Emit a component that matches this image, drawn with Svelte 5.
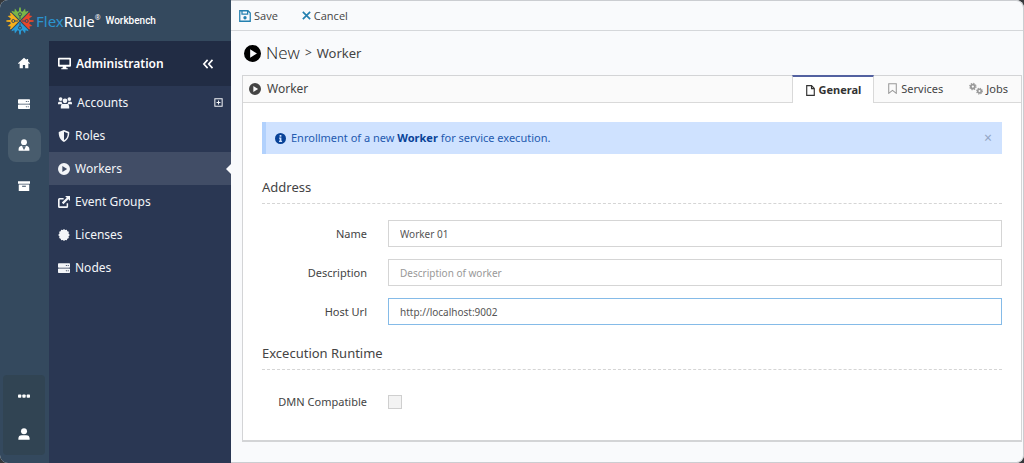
<script>
  let name = $state('Worker 01');
  let description = $state('');
  let hostUrl = $state('http://localhost:9002');
  let dmnCompatible = $state(false);
  let showInfo = $state(true);
  let selectedTab = $state('General');

  const rail = [
    { icon: 'home', label: 'Home' },
    { icon: 'server', label: 'Servers' },
    { icon: 'admin', label: 'Administration', active: true },
    { icon: 'archive', label: 'Archive' }
  ];

  const menu = [
    { icon: 'users', label: 'Accounts', expandable: true },
    { icon: 'shield', label: 'Roles' },
    { icon: 'play', label: 'Workers', active: true },
    { icon: 'external', label: 'Event Groups' },
    { icon: 'seal', label: 'Licenses' },
    { icon: 'server', label: 'Nodes' }
  ];

  const tabs = [
    { icon: 'file', label: 'General' },
    { icon: 'bookmark', label: 'Services' },
    { icon: 'gears', label: 'Jobs' }
  ];

  const arms = ['#7ab648', '#e8472b', '#2a9bd6', '#f5b01c'];
</script>

{#snippet icon(kind)}
  <svg class="icon {kind}" viewBox="0 0 16 16" fill="currentColor" aria-hidden="true">
    {#if kind === 'home'}
      <path d="M8 1 0 8.200l1 1.200 1.200-1V15h4.300v-4.500h3V15h4.300V8.400l1.200 1 1-1.200-2.500-2.300V2.500h-2v1.600z" />
    {:else if kind === 'server'}
      <path fill-rule="evenodd" d="M1 1.500h14a1 1 0 0 1 1 1v4a1 1 0 0 1-1 1H1a1 1 0 0 1-1-1v-4a1 1 0 0 1 1-1zM10.500 4v1.200h1.200V4zM13 4v1.200h1.200V4zM1 8.500h14a1 1 0 0 1 1 1v4a1 1 0 0 1-1 1H1a1 1 0 0 1-1-1v-4a1 1 0 0 1 1-1zm9.500 2.500v1.200h1.200V11zm2.500 0v1.200h1.200V11z" />
    {:else if kind === 'admin'}
      <circle cx="8" cy="4.200" r="3.900" />
      <path d="M5.500 9 7.400 14.500 8 11.500 7.500 9.800h1l-.5 1.700.6 3L10.500 9c2.800.3 4.700 2 4.700 4.500v2.300H.8v-2.300C.8 11 2.700 9.300 5.500 9z" />
    {:else if kind === 'archive'}
      <path fill-rule="evenodd" d="M0 1.500h16V5H0zM1 6h14v8.500H1zM5.500 7.500v1.400h5V7.500z" />
    {:else if kind === 'user'}
      <circle cx="8" cy="4.200" r="4" />
      <path d="M5 9.500h6a4.500 4.500 0 0 1 4.500 4.500v1.800H.5V14A4.500 4.500 0 0 1 5 9.500z" />
    {:else if kind === 'dots'}
      <rect x="0" y="6" width="4.400" height="4.400" rx="1" />
      <rect x="5.800" y="6" width="4.400" height="4.400" rx="1" />
      <rect x="11.600" y="6" width="4.400" height="4.400" rx="1" />
    {:else if kind === 'desktop'}
      <path fill-rule="evenodd" d="M1.300 1h13.400A1.300 1.300 0 0 1 16 2.300v8.400a1.300 1.300 0 0 1-1.300 1.300H10l.5 1.700H12V15H4v-1.300h1.500L6 12H1.300A1.300 1.300 0 0 1 0 10.700V2.300A1.300 1.300 0 0 1 1.300 1zM2 3v6.500h12V3z" />
    {:else if kind === 'users'}
      <circle cx="3" cy="3.500" r="2.100" />
      <circle cx="13" cy="3.500" r="2.100" />
      <circle cx="8" cy="5.500" r="2.700" />
      <path d="M1.600 6.500h2.600c.2 1.600.7 2.300 1.500 3H0V8.100c0-.9.700-1.600 1.600-1.600zm10.200 0h2.600c.9 0 1.600.7 1.600 1.600v1.400h-5.700c.8-.7 1.300-1.400 1.500-3zM6 9.200h4a2.800 2.800 0 0 1 2.800 2.800v2.200H3.200V12A2.800 2.800 0 0 1 6 9.200z" />
    {:else if kind === 'shield'}
      <path fill-rule="evenodd" d="M8 0l7 2.800C15.300 9 12.800 13.700 8 16 3.200 13.700.7 9 1 2.800zm0 2.200v11.500c3.400-2 5-5.200 5-9.500z" />
    {:else if kind === 'play'}
      <path fill-rule="evenodd" d="M8 0a8 8 0 1 0 0 16A8 8 0 0 0 8 0zM5.800 4.100 12.200 8l-6.400 3.900z" />
    {:else if kind === 'external'}
      <path d="M9.500 0H16v6.500l-2.200-2.200-6.600 6.600-2.100-2.100 6.600-6.600zM2 2.500h5.500v2H2.200v9.300h9.300V9.500h2V14a2 2 0 0 1-2 2H2a2 2 0 0 1-2-2V4.500a2 2 0 0 1 2-2z" />
    {:else if kind === 'seal'}
      <path d="M8 0l1.600 1.400L11.700.9l.8 2 2 .8-.5 2.200L15.800 8 14 9.900l.5 2.200-2 .8-.8 2-2.100-.4L8 16l-1.600-1.500-2.100.4-.8-2-2-.8.500-2.200L.2 8 2 5.900l-.5-2.200 2-.8.8-2 2.100.5z" />
    {:else if kind === 'plus-box'}
      <path fill="none" stroke="currentColor" stroke-width="1.800" d="M1.500 1.500h13v13h-13zM8 4.500v7M4.500 8h7" />
    {:else if kind === 'collapse'}
      <path fill="none" stroke="currentColor" stroke-width="2.200" d="M7.500 2.500 2.500 8l5 5.500M14 2.500 9 8l5 5.500" />
    {:else if kind === 'save'}
      <path fill="none" stroke="currentColor" stroke-width="1.700" d="M1 1h11l3 3v11H1zM4 1v4.500h7.500V1" />
      <circle cx="8" cy="10.300" r="2.200" />
    {:else if kind === 'cancel'}
      <path fill="none" stroke="currentColor" stroke-width="3" d="m1.500 1.500 13 13M14.500 1.500l-13 13" />
    {:else if kind === 'info'}
      <path fill-rule="evenodd" d="M8 0a8 8 0 1 0 0 16A8 8 0 0 0 8 0zM6.700 3h2.600v2.400H6.700zM6 6.600h3.300v4.700h1V13H5.800v-1.700h1V8.300H6z" />
    {:else if kind === 'file'}
      <path fill="none" stroke="currentColor" stroke-width="1.700" d="M2.500 1h7l4 4v10h-11zM9.500 1v4.200h4" />
    {:else if kind === 'bookmark'}
      <path fill="none" stroke="currentColor" stroke-width="1.500" d="M2.500 1h11v14L8 10.800 2.500 15z" />
    {:else if kind === 'gears'}
      <g fill="none" stroke="currentColor">
        <circle cx="4.400" cy="5.200" r="2.300" stroke-width="2" />
        <circle cx="4.400" cy="5.200" r="3.600" stroke-width="1.300" stroke-dasharray="1.500 1.330" />
        <circle cx="12" cy="10.400" r="2.100" stroke-width="1.900" />
        <circle cx="12" cy="10.400" r="3.300" stroke-width="1.200" stroke-dasharray="1.400 1.200" />
      </g>
    {/if}
  </svg>
{/snippet}

<div class="window">
  <aside class="sidebar">
    <header class="brand">
      <svg class="logo" viewBox="0 0 28 28" aria-hidden="true">
        {#each arms as color, i (color)}
          <g transform="rotate({i * 90} 14 14)">
            <path
              fill={color}
              d="M14 13.200 6.200 5.600 5.400 3.800l3 .9L8.900 1.600l2.500 3.200 1.500-.6L13.200.4h1.600l.3 3.800 1.500.6 2.500-3.200.5 3.100 3-.9-.8 1.800z"
            />
            <path d="M14 12V8.500" stroke="#34495e" />
            <circle cx="14" cy="7.300" r="1.500" fill={color} stroke="#34495e" />
          </g>
        {/each}
      </svg>
      <span class="wordmark"><span class="flex-part">Flex</span>Rule<sup>®</sup></span>
      <span class="product">Workbench</span>
    </header>

    <nav class="rail" aria-label="Sections">
      {#each rail as item (item.label)}
        <button type="button" class="rail-item" class:active={item.active} aria-label={item.label}>
          {@render icon(item.icon)}
        </button>
      {/each}
      <div class="rail-footer">
        <button type="button" aria-label="More">{@render icon('dots')}</button>
        <button type="button" aria-label="Profile">{@render icon('user')}</button>
      </div>
    </nav>

    <nav class="menu" aria-label="Administration">
      <div class="menu-header">
        {@render icon('desktop')}
        <span>Administration</span>
        <button type="button" class="collapse-button" aria-label="Collapse">
          {@render icon('collapse')}
        </button>
      </div>
      {#each menu as item (item.label)}
        <a href="#{item.icon}" class="menu-item" class:active={item.active}>
          {@render icon(item.icon)}
          <span>{item.label}</span>
          {#if item.expandable}{@render icon('plus-box')}{/if}
        </a>
      {/each}
    </nav>
  </aside>

  <main>
    <div class="toolbar">
      <button type="button">{@render icon('save')}Save</button>
      <button type="button">{@render icon('cancel')}Cancel</button>
    </div>

    <h1>
      {@render icon('play')}
      <span class="action">New</span>
      <span class="separator">&gt;</span>
      <span class="entity">Worker</span>
    </h1>

    <section class="panel">
      <header class="panel-header">
        <h2>{@render icon('play')}Worker</h2>
        <div class="tabs" role="tablist">
          {#each tabs as tab (tab.label)}
            <button
              type="button"
              role="tab"
              class="tab"
              class:selected={tab.label === selectedTab}
              aria-selected={tab.label === selectedTab}
              onclick={() => (selectedTab = tab.label)}
            >
              {@render icon(tab.icon)}
              {tab.label}
            </button>
          {/each}
        </div>
      </header>

      <form class="panel-body" onsubmit={(e) => e.preventDefault()}>
        {#if showInfo}
          <div class="alert">
            {@render icon('info')}
            <p>Enrollment of a new <strong>Worker</strong> for service execution.</p>
            <button type="button" aria-label="Close" onclick={() => (showInfo = false)}>×</button>
          </div>
        {/if}

        <h3>Address</h3>
        <div class="fields">
          <label for="name">Name</label>
          <input id="name" type="text" bind:value={name} />
          <label for="description">Description</label>
          <input id="description" type="text" placeholder="Description of worker" bind:value={description} />
          <label for="host-url">Host Url</label>
          <input id="host-url" class="current" type="text" bind:value={hostUrl} />
        </div>

        <h3>Excecution Runtime</h3>
        <div class="fields">
          <label for="dmn">DMN Compatible</label>
          <input id="dmn" type="checkbox" bind:checked={dmnCompatible} />
        </div>
      </form>
    </section>
  </main>
</div>

<style>
  :global(body) {
    background: #36393c;
  }

  .window {
    display: flex;
    box-sizing: border-box;
    min-height: 100vh;
    border-radius: 8px;
    overflow: hidden;
    background: #f9fafc;
    font-family: 'Noto Sans', 'Open Sans', sans-serif;
    font-size: 12px;
    line-height: 16px;
    color: #444;
  }

  button {
    display: flex;
    align-items: center;
    margin: 0;
    padding: 0;
    border: none;
    background: none;
    color: inherit;
    font: inherit;
    cursor: pointer;
  }

  h1,
  h2,
  h3,
  p {
    margin: 0;
    font-weight: 400;
  }

  .icon {
    flex: none;
    width: 12px;
    height: 12px;
  }

  /* Sidebar */
  .sidebar {
    display: grid;
    flex: none;
    grid-template: 41px 1fr / 49px 182px;
    background: #34495e;
    color: #fff;
  }

  .brand {
    display: flex;
    grid-column: 1 / 3;
    align-items: center;
    padding-left: 6px;
  }

  .logo {
    width: 28px;
    height: 28px;
  }

  .wordmark {
    margin-left: 2px;
    font-family: 'Noto Sans', 'Open Sans', sans-serif;
    font-size: 15px;
    line-height: 24px;
  }

  .flex-part {
    color: #2c94cf;
  }

  sup {
    font-size: 7px;
    line-height: 0;
    vertical-align: 7px;
  }

  .product {
    margin-left: 5px;
    font-family: Roboto, sans-serif;
    font-size: 10px;
    font-weight: 500;
  }

  .rail {
    display: flex;
    flex-direction: column;
    align-items: center;
    gap: 7px;
    padding: 5px 4px 8px 3px;
  }

  .rail-item {
    justify-content: center;
    width: 33px;
    height: 34px;
    border-radius: 8px;
  }

  .rail-item.active {
    background: #485c6d;
  }

  .rail-footer {
    display: flex;
    flex-direction: column;
    align-self: stretch;
    align-items: center;
    margin-top: auto;
    padding: 2px 0;
    border-radius: 4px;
    background: #314453;
  }

  .rail-footer button {
    padding: 13px;
  }

  .rail-footer .icon {
    width: 12px;
  }

  .menu {
    background: #2a3753;
  }

  .menu-header,
  .menu-item {
    display: flex;
    align-items: center;
    gap: 5px;
    padding: 0 8px 0 9px;
  }

  .menu-header {
    height: 45px;
    background: #212c44;
    font-weight: 600;
  }

  .menu-header .desktop {
    width: 13px;
    height: 13px;
  }

  .collapse-button {
    margin-left: auto;
    padding: 0 9px;
  }

  .menu-item {
    position: relative;
    height: 33px;
    color: #f3f5f8;
    text-decoration: none;
  }

  .menu-item.active {
    background: #414d66;
  }

  .menu-item.active::after {
    content: '';
    position: absolute;
    right: 0;
    border: 5px solid transparent;
    border-left: none;
    border-right-color: #f9fafc;
  }

  .users {
    width: 14px;
    height: 14px;
  }

  .plus-box {
    width: 9px;
    height: 9px;
    margin-left: auto;
  }

  /* Content */
  main {
    flex: 1;
    min-width: 0;
    border: solid #cbcdd1;
    border-width: 1px 1px 1px 0;
    border-radius: 0 8px 8px 0;
  }

  .toolbar {
    display: flex;
    gap: 24px;
    height: 29px;
    padding: 0 8px;
    border-bottom: 1px solid #d5d7da;
    font-family: 'Open Sans', 'Noto Sans', sans-serif;
    font-size: 11px;
  }

  .toolbar button {
    gap: 3px;
  }

  .toolbar .icon {
    color: #2480b0;
  }

  .toolbar .cancel {
    width: 9px;
    height: 9px;
  }

  h1 {
    display: flex;
    align-items: center;
    gap: 5px;
    height: 44px;
    padding-left: 13px;
    font-size: 13px;
  }

  h1 .icon {
    width: 17px;
    height: 17px;
    color: #000;
  }

  .action {
    font-family: 'Open Sans', 'Noto Sans', sans-serif;
    font-size: 17px;
    font-weight: 300;
    color: #222;
  }

  .separator {
    font-size: 12px;
  }

  .panel {
    margin: 0 1px 0 11px;
    border: 1px solid #d3d4d6;
    border-bottom-width: 2px;
    background: #fff;
  }

  .panel-header {
    display: flex;
    justify-content: space-between;
    border-bottom: 1px solid #d9d9d9;
    background: #fafafa;
  }

  h2 {
    display: flex;
    align-items: center;
    gap: 6px;
    padding-left: 6px;
    font-size: 12px;
  }

  .tabs {
    display: flex;
    margin: -1px 0;
  }

  .tab {
    gap: 3px;
    height: 28px;
    padding: 0 13px;
    border-bottom: 1px solid #d9d9d9;
    font-size: 11px;
  }

  .tab .icon {
    width: 11px;
    height: 11px;
    color: #999;
  }

  .tab .gears {
    width: 14px;
    height: 14px;
  }

  .tab.selected {
    padding: 0 12px;
    border: solid #d9d9d9;
    border-width: 2px 1px 0;
    border-top-color: #5361a0;
    background: #fff;
    font-weight: 700;
    color: #333;
  }

  .tab.selected .icon {
    color: #333;
  }

  .panel-body {
    padding: 19px 19px 30px;
  }

  .alert {
    display: flex;
    align-items: center;
    gap: 5px;
    height: 32px;
    margin-bottom: 23px;
    padding: 0 10px 0 9px;
    border-left: 4px solid #b1d1fd;
    background: #cfe2ff;
    color: #245bb0;
    font-size: 11px;
  }

  .alert .icon {
    width: 11px;
    height: 11px;
    color: #084298;
  }

  .alert strong {
    color: #084298;
  }

  .alert button {
    margin-left: auto;
    font-size: 14px;
    color: #93a6c4;
  }

  h3 {
    margin-bottom: 16px;
    padding-bottom: 6px;
    border-bottom: 1px dashed #d5d5d5;
    font-size: 13px;
    line-height: 20px;
  }

  .fields {
    display: grid;
    grid-template-columns: 105px 1fr;
    gap: 12px 21px;
    align-items: center;
    margin-bottom: 18px;
    font-size: 11px;
  }

  .fields + h3 {
    margin-bottom: 24px;
  }

  h3 + .fields:last-child {
    margin-bottom: 0;
  }

  label {
    text-align: right;
  }

  input[type='text'] {
    box-sizing: border-box;
    width: 100%;
    height: 27px;
    padding: 0 11px;
    border: 1px solid #d5d5d5;
    border-radius: 0;
    outline: none;
    background: #fff;
    color: #555;
    font-family: 'Noto Sans', 'Open Sans', sans-serif;
    font-size: 10px;
  }

  input[type='text']::placeholder {
    color: #999;
  }

  input[type='text'].current,
  input[type='text']:focus {
    border-color: #85bbe8;
  }

  input[type='checkbox'] {
    appearance: none;
    box-sizing: border-box;
    width: 14px;
    height: 14px;
    margin: 1px 0;
    border: 1px solid #cfcfcf;
    background: #f3f3f3;
  }

  input[type='checkbox']:checked {
    background: #2480b0;
  }
</style>
